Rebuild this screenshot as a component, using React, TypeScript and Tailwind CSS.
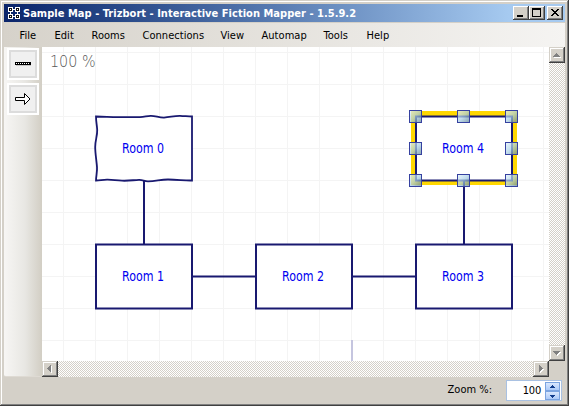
import React from "react";

type Dir = "up" | "down" | "left" | "right";

const ARROWS: Record<Dir, string> = {
  up: "M7 6h1v1h1v1h1v1h1v1H4v-1h1v-1h1v-1h1z",
  down: "M4 6h7v1h-1v1h-1v1h-1v1h-1v-1h-1v-1h-1v-1h-1z",
  left: "M8 4h1v7h-1v-1h-1v-1h-1v-1h-1v-1h1v-1h1v-1h1z",
  right: "M6 4h1v1h1v1h1v1h1v1h-1v1h-1v1h-1v1h-1z",
};

const RAISED =
  "shadow-[inset_-1px_-1px_#404040,inset_1px_1px_#d4d0c8,inset_-2px_-2px_#808080,inset_2px_2px_#fff]";
const DITHER =
  "bg-[repeating-conic-gradient(#d4d0c8_0_25%,#fff_0_50%)] bg-[length:2px_2px]";

function ScrollButton({ dir }: { dir: Dir }) {
  return (
    <button className={`block h-4 w-4 shrink-0 bg-[#d4d0c8] ${RAISED}`}>
      <svg width="16" height="16" shapeRendering="crispEdges" className="block">
        <path d={ARROWS[dir]} fill="#fff" transform="translate(1 1)" />
        <path d={ARROWS[dir]} fill="#808080" />
      </svg>
    </button>
  );
}

function CaptionButton({ children }: { children: React.ReactNode }) {
  return (
    <button className="block h-[14px] w-4 bg-[#d4d0c8] shadow-[inset_-1px_-1px_#404040,inset_1px_1px_#fff,inset_-2px_-2px_#808080]">
      <svg width="16" height="14" shapeRendering="crispEdges" className="block">
        {children}
      </svg>
    </button>
  );
}

function ToolButton({ children }: { children: React.ReactNode }) {
  return (
    <button className="block h-8 w-8 border-2 border-white bg-white">
      <span className="flex h-7 w-7 items-center justify-center border-2 border-[#dcdcdc] bg-[#f0f0f0]">
        {children}
      </span>
    </button>
  );
}

const MENU: { label: string; cls: string }[] = [
  { label: "File", cls: "w-[35px]" },
  { label: "Edit", cls: "w-[37px]" },
  { label: "Rooms", cls: "w-[51px]" },
  { label: "Connections", cls: "w-[78px]" },
  { label: "View", cls: "w-[41px]" },
  { label: "Automap", cls: "w-[62px]" },
  { label: "Tools", cls: "w-[43px]" },
  { label: "Help", cls: "w-[40px]" },
];

const VERTICALS = Array.from({ length: 16 }, (_, i) => 63 + i * 32);
const HORIZONTALS = Array.from({ length: 10 }, (_, i) => 52 + i * 32);
const HANDLES = [
  [409, 110], [457, 110], [505, 110],
  [409, 142], [505, 142],
  [409, 174], [457, 174], [505, 174],
];

function RoomLabel({ x, y, children }: { x: number; y: number; children: string }) {
  return (
    <text x={x} y={y} fill="#0000f0" fontSize="13.5" textLength="42" lengthAdjust="spacingAndGlyphs">
      {children}
    </text>
  );
}

function MapCanvas() {
  return (
    <svg
      width="507"
      height="314"
      viewBox="42 47 507 314"
      className="block bg-white font-['DejaVu_Sans_Condensed','DejaVu_Sans',sans-serif]"
    >
      <defs>
        <linearGradient id="handle" x1="0" y1="0" x2="1" y2="1">
          <stop offset="0" stopColor="#e4f4fc" stopOpacity=".75" />
          <stop offset=".5" stopColor="#a9cfe6" stopOpacity=".72" />
          <stop offset="1" stopColor="#5c8090" stopOpacity=".72" />
        </linearGradient>
      </defs>
      <g fill="#f4f4f4">
        {VERTICALS.map((x) => <rect key={x} x={x} y="47" width="1" height="314" />)}
        {HORIZONTALS.map((y) => <rect key={y} x="42" y={y} width="507" height="1" />)}
      </g>
      <text x="50" y="67" fill="#585858" fontSize="16" fontWeight="200" textLength="45.5" lengthAdjust="spacingAndGlyphs" className="font-['DejaVu_Sans_Light','DejaVu_Sans',sans-serif]">
        100 %
      </text>
      <rect x="411" y="111" width="106" height="74" fill="#ffd700" />
      <g stroke="#191970" strokeWidth="2" fill="none">
        <path d="M144 180V244M192 276.5H256M352 276.5H416M464 180V244" />
        <path d="M352 340v21" stroke="#c5c5df" />
        <path
          fill="#fff"
          strokeWidth="1.8"
          d="M96 116.5C104 116.500 110 117.2 118 117.2H140C145 117 147 115.7 151 115.8C156 116 159 117.700 164 117.600C170 117.300 174 115.700 180 115.800C185 116 188 116.500 192 116.500V180.500C184 180.700 178 179.500 168 179.500C160 179.500 156 181.300 148 181.300C144 181.200 143 179.700 139 179.800C133 180 130 181 122 180.700C116 180.500 112 179.600 107 179.700C102 179.800 100 180.500 96 180.500C96 176 97.400 172 97 167C96.500 160 95.200 154 95.200 147C95.200 140 97.400 136 97.200 130C97 125 96 122 96 116.500Z"
        />
        <rect x="96" y="244.5" width="96" height="64" fill="#fff" />
        <rect x="256" y="244.5" width="96" height="64" fill="#fff" />
        <rect x="416" y="244.5" width="96" height="64" fill="#fff" />
        <rect x="416" y="116.5" width="96" height="64" fill="#fff" />
      </g>
      {HANDLES.map(([x, y]) => (
        <rect key={`${x}-${y}`} x={x + 0.5} y={y + 0.5} width="12" height="12" fill="url(#handle)" stroke="#3641a0" />
      ))}
      <RoomLabel x={122} y={153}>Room 0</RoomLabel>
      <RoomLabel x={122} y={281}>Room 1</RoomLabel>
      <RoomLabel x={282} y={281}>Room 2</RoomLabel>
      <RoomLabel x={442} y={281}>Room 3</RoomLabel>
      <RoomLabel x={442} y={153}>Room 4</RoomLabel>
    </svg>
  );
}

export default function App() {
  return (
    <div className="flex h-[406px] w-[569px] flex-col overflow-hidden bg-[#d4d0c8] p-1 font-['DejaVu_Sans_Condensed','DejaVu_Sans',sans-serif] text-[11px] text-black shadow-[inset_-1px_-1px_#404040,inset_1px_1px_#d4d0c8,inset_-2px_-2px_#808080,inset_2px_2px_#fff]">
      <header className="flex h-[18px] w-[561px] shrink-0 items-center bg-linear-to-r from-[#0a246a] to-[#a6caf0] to-90% pr-[2px] pl-1">
        <svg width="13" height="13" shapeRendering="crispEdges" className="mt-px shrink-0">
          <path d="M0 0h5v5H0zM7 0h5v5H7zM0 7h5v5H0zM7 7h5v5H7zM5 2h2v1H5zM5 9h2v1H5zM2 5h1v2H2zM9 5h1v2H9z" fill="#fff" />
          <path d="M1 1h3v3H1zM8 1h3v3H8zM1 8h3v3H1zM8 8h3v3H8z" fill="#111" />
          <path d="M2 2h1v1H2zM9 2h1v1H9zM2 9h1v1H2zM9 9h1v1H9z" fill="#fff" />
        </svg>
        <h1 className="mt-px ml-[2px] w-[480px] text-[11px] leading-[16px] font-bold tracking-[0.03px] whitespace-pre text-white">
          Sample Map - Trizbort - Interactive Fiction Mapper - 1.5.9.2
        </h1>
        <div className="ml-auto flex shrink-0">
          <CaptionButton><path d="M4 9h6v2H4z" /></CaptionButton>
          <CaptionButton>
            <path fillRule="evenodd" d="M3 2h9v9H3zM4 4v6h7V4z" />
          </CaptionButton>
          <span className="w-[2px]" />
          <CaptionButton>
            <path d="M4 3h2v1h1v1h2V4h1V3h2v1h-1v1h-1v1H9v1h1v1h1v1h1v1h-2V9H9V8H7v1H6v1H4V9h1V8h1V7h1V6H6V5H5V4H4z" />
          </CaptionButton>
        </div>
      </header>
      <nav className="mt-px flex h-6 w-[561px] shrink-0 items-center bg-linear-to-r from-[#d6d2ca] to-[#f5f4f2] pt-px pl-[15.5px]">
        {MENU.map((m) => (
          <span key={m.label} className={`block shrink-0 leading-4 tracking-[0.04px] whitespace-nowrap ${m.cls}`}>
            {m.label}
          </span>
        ))}
      </nav>
      <main className="flex h-[330px] w-[561px] shrink-0">
        <aside className="flex w-[38px] shrink-0 flex-col gap-[3px] rounded-b-[2px] border-b border-[#dedad3] bg-linear-to-r from-[#f7f6f4] via-[#e8e7e3] via-55% to-[#d2cec4] pt-px pl-[3px]">
          <ToolButton>
            <svg width="16" height="16" shapeRendering="crispEdges" className="shrink-0">
              <path d="M0 6h16v3H0z" />
              <path d="M1 7.5h14" stroke="#fff" strokeDasharray="1 1" />
              <path d="M1 9.5h15" stroke="#c8c8c8" />
            </svg>
          </ToolButton>
          <ToolButton>
            <svg width="16" height="16" fill="#fff" stroke="#000" className="shrink-0">
              <path d="M.5 6.5h9v-4L15 8l-5.5 5.5v-4H.5z" />
            </svg>
          </ToolButton>
        </aside>
        <section className="flex w-[507px] shrink-0 flex-col">
          <MapCanvas />
          <div className={`flex h-4 justify-between ${DITHER}`}>
            <ScrollButton dir="left" />
            <ScrollButton dir="right" />
          </div>
        </section>
        <div className={`flex h-[314px] w-4 flex-col justify-between ${DITHER}`}>
          <ScrollButton dir="up" />
          <ScrollButton dir="down" />
        </div>
      </main>
      <footer className="flex h-[25px] shrink-0 items-center justify-end pr-[3px]">
        <label className="mt-px mr-[14px] leading-4">Zoom %:</label>
        <div className="mt-[2px] flex h-[21px] w-[56px] items-center justify-end border border-[#a9c1e2] bg-white pr-px">
          <span className="mr-1 leading-4 tracking-[-0.2px]">100</span>
          <svg width="15" height="18" shapeRendering="crispEdges">
            <defs>
              <linearGradient id="spin" x1="0" y1="0" x2="0" y2="1">
                <stop offset="0" stopColor="#dceaff" />
                <stop offset="1" stopColor="#a9c8f7" />
              </linearGradient>
            </defs>
            <rect x=".5" y=".5" width="14" height="8" fill="url(#spin)" stroke="#7ba4e0" />
            <rect x=".5" y="9.5" width="14" height="8" fill="url(#spin)" stroke="#7ba4e0" />
            <path d="M7 3h1v1h1v1h1v1H5V5h1V4h1zM5 13h5v1H9v1H8v1H7v-1H6v-1H5z" fill="#103c8c" />
          </svg>
        </div>
      </footer>
    </div>
  );
}
